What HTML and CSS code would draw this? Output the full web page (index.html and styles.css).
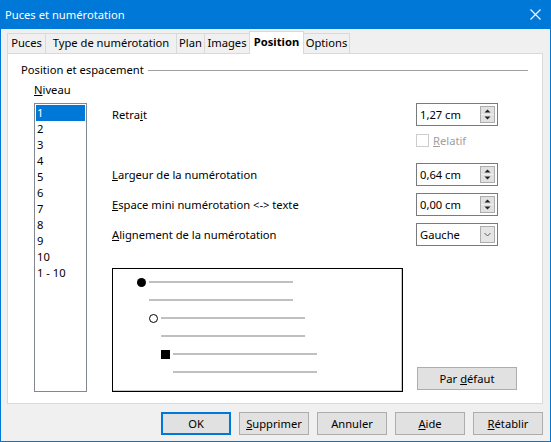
FILE: index.html
```
<!DOCTYPE html>
<html lang="fr">
<head>
<meta charset="utf-8">
<title>Puces et numérotation</title>
<link rel="stylesheet" href="styles.css">
</head>
<body>
<div class="window">
  <div class="titlebar">
    <span class="title">Puces et numérotation</span>
    <svg class="close" width="11" height="11" viewBox="0 0 11 11"><path d="M0.5 0.5L10.5 10.5M10.5 0.5L0.5 10.5" stroke="#ffffff" stroke-width="1.1" fill="none"/></svg>
  </div>
  <div class="main">
    <div class="tabs">
      <div class="tab t-puces">Puces</div>
      <div class="tab t-type">Type de numérotation</div>
      <div class="tab t-plan">Plan</div>
      <div class="tab t-images">Images</div>
      <div class="tab active t-position">Position</div>
      <div class="tab t-options">Options</div>
    </div>
    <div class="panel">
      <div class="group-head"><span class="group-title">Position et espacement</span><span class="rule"></span></div>
      <div class="group-body">
        <div class="level-col">
          <div class="level-label"><u>N</u>iveau</div>
          <ul class="level-list">
            <li class="sel">1</li>
            <li>2</li>
            <li>3</li>
            <li>4</li>
            <li>5</li>
            <li>6</li>
            <li>7</li>
            <li>8</li>
            <li>9</li>
            <li>10</li>
            <li>1 - 10</li>
          </ul>
        </div>
        <div class="settings">
          <div class="row">
            <span class="label">Retra<u>i</u>t</span>
            <div class="field">
              <span class="value">1,27 cm</span>
              <svg class="spinbtn" width="15" height="17" viewBox="0 0 15 17"><rect x="0.5" y="0.5" width="14" height="16" fill="#e1e1e1" stroke="#adadad"/><line x1="1" y1="8.5" x2="14" y2="8.5" stroke="#f0f0f0"/><polygon points="4.5,6.5 10.5,6.5 7.5,3.5" fill="#202020"/><polygon points="4.5,10.5 10.5,10.5 7.5,13.5" fill="#202020"/></svg>
            </div>
          </div>
          <div class="row check-row">
            <span class="label"></span>
            <div class="check">
              <span class="checkbox"></span>
              <span class="check-label"><u>R</u>elatif</span>
            </div>
          </div>
          <div class="row r-largeur">
            <span class="label"><u>L</u>argeur de la numérotation</span>
            <div class="field">
              <span class="value">0,64 cm</span>
              <svg class="spinbtn" width="15" height="17" viewBox="0 0 15 17"><rect x="0.5" y="0.5" width="14" height="16" fill="#e1e1e1" stroke="#adadad"/><line x1="1" y1="8.5" x2="14" y2="8.5" stroke="#f0f0f0"/><polygon points="4.5,6.5 10.5,6.5 7.5,3.5" fill="#202020"/><polygon points="4.5,10.5 10.5,10.5 7.5,13.5" fill="#202020"/></svg>
            </div>
          </div>
          <div class="row r-next">
            <span class="label"><u>E</u>space mini numérotation &lt;-&gt; texte</span>
            <div class="field">
              <span class="value">0,00 cm</span>
              <svg class="spinbtn" width="15" height="17" viewBox="0 0 15 17"><rect x="0.5" y="0.5" width="14" height="16" fill="#e1e1e1" stroke="#adadad"/><line x1="1" y1="8.5" x2="14" y2="8.5" stroke="#f0f0f0"/><polygon points="4.5,6.5 10.5,6.5 7.5,3.5" fill="#202020"/><polygon points="4.5,10.5 10.5,10.5 7.5,13.5" fill="#202020"/></svg>
            </div>
          </div>
          <div class="row r-next">
            <span class="label"><u>A</u>lignement de la numérotation</span>
            <div class="field">
              <span class="value">Gauche</span>
              <svg class="spinbtn" width="15" height="17" viewBox="0 0 15 17"><rect x="0.5" y="0.5" width="14" height="16" fill="#e5e5e5" stroke="#adadad"/><polyline points="4.5,7 7.5,10 10.5,7" fill="none" stroke="#606060" stroke-width="1"/></svg>
            </div>
          </div>
          <div class="preview-row">
            <div class="preview">
              <div class="pline i1"><span class="marker dot"></span><span class="bar"></span></div>
              <div class="pline i1"><span class="bar"></span></div>
              <div class="pline i2"><span class="marker ring"></span><span class="bar"></span></div>
              <div class="pline i2"><span class="bar"></span></div>
              <div class="pline i3"><span class="marker square"></span><span class="bar"></span></div>
              <div class="pline i3"><span class="bar"></span></div>
            </div>
            <button class="btn default-btn">Par <u>d</u>éfaut</button>
          </div>
        </div>
      </div>
    </div>
    <div class="buttons">
      <button class="btn primary">OK</button>
      <button class="btn"><u>S</u>upprimer</button>
      <button class="btn">Annuler</button>
      <button class="btn"><u>A</u>ide</button>
      <button class="btn"><u>R</u>établir</button>
    </div>
  </div>
</div>
</body>
</html>
```
FILE: styles.css
```
* {
  box-sizing: border-box;
}

html, body {
  margin: 0;
  padding: 0;
}

body {
  width: 551px;
  height: 442px;
  overflow: hidden;
  font-family: "Noto Sans", "Open Sans", sans-serif;
  font-size: 11.2px;
  line-height: 16px;
  color: #000;
}

.window {
  width: 551px;
  height: 442px;
  background: #f0f0f0;
  border: 1px solid #0078d7;
  border-top: none;
  display: flex;
  flex-direction: column;
}

.titlebar {
  height: 29px;
  background: #0078d7;
  color: #fff;
  display: flex;
  align-items: center;
  padding-left: 4px;
  padding-right: 9px;
}

.title {
  flex: 1;
}

.close {
  display: block;
}

.main {
  padding: 2px 7px 0 6px;
  display: flex;
  flex-direction: column;
}

.tabs {
  height: 22px;
  display: flex;
  align-items: flex-end;
}

.tab {
  height: 20px;
  border: 1px solid #d9d9d9;
  border-bottom: none;
  background: #f0f0f0;
  text-align: center;
  line-height: 18px;
  white-space: nowrap;
  margin-left: -1px;
}

.tab:first-child {
  margin-left: 0;
}

.tab.active {
  height: 23px;
  background: #fff;
  font-weight: bold;
  margin-bottom: -1px;
  position: relative;
  z-index: 1;
  line-height: 20px;
}

.t-puces { width: 39px; }
.t-type { width: 132px; }
.t-plan { width: 29px; }
.t-images { width: 46px; }
.t-position { width: 55px; }
.t-options { width: 47px; }

.panel {
  height: 351px;
  background: #fff;
  border: 1px solid #d9d9d9;
  display: flex;
  flex-direction: column;
}

.group-head {
  margin-top: 8px;
  height: 16px;
  display: flex;
  align-items: center;
  padding-left: 13px;
  padding-right: 14px;
}

.group-title {
  white-space: nowrap;
}

.rule {
  flex: 1;
  height: 1px;
  background: #a0a0a0;
  margin-left: 4px;
}

.group-body {
  display: flex;
  align-items: flex-start;
  padding-left: 26px;
}

.level-col {
  width: 53px;
  margin-top: 4px;
  margin-right: 25px;
}

.level-label {
  height: 16px;
  white-space: nowrap;
}

.level-list {
  list-style: none;
  margin: 5px 0 0 0;
  padding: 1px;
  height: 289px;
  border: 1px solid #828790;
  background: #fff;
}

.level-list li {
  height: 16px;
  line-height: 16px;
  padding-left: 1px;
  white-space: nowrap;
}

.level-list li.sel {
  background: #0078d7;
  color: #fff;
}

.settings {
  width: 405px;
  margin-top: 25px;
  display: flex;
  flex-direction: column;
}

.row {
  display: flex;
  align-items: center;
  margin-right: 19px;
}

.label {
  flex: 1;
  white-space: nowrap;
}

.field {
  width: 82px;
  height: 23px;
  border: 1px solid #7a7a7a;
  background: #fff;
  display: flex;
  align-items: center;
  padding-left: 3px;
  padding-right: 2px;
}

.value {
  flex: 1;
  white-space: nowrap;
}

.spinbtn {
  display: block;
}

.check-row {
  margin-top: 8px;
  height: 13px;
}

.check {
  width: 82px;
  display: flex;
  align-items: center;
}

.checkbox {
  width: 13px;
  height: 13px;
  border: 1px solid #cccccc;
  background: #fff;
  margin-right: 4px;
}

.check-label {
  color: #a0a0a0;
}

.r-largeur {
  margin-top: 16px;
}

.r-next {
  margin-top: 7px;
}

.preview-row {
  margin-top: 22px;
  display: flex;
  align-items: flex-end;
}

.preview {
  width: 291px;
  height: 124px;
  border: 1px solid #000;
  box-shadow: inset -1px -1px 0 #c8c8c8;
  background: #fff;
  padding-top: 4px;
  display: flex;
  flex-direction: column;
}

.pline {
  height: 18px;
  display: flex;
  align-items: center;
}

.pline.i1 { padding-left: 36px; }
.pline.i2 { padding-left: 48px; }
.pline.i3 { padding-left: 60px; }

.bar {
  width: 144px;
  height: 2px;
  background: #c0c0c0;
}

.marker {
  width: 9px;
  height: 9px;
  margin-left: -12px;
  margin-right: 3px;
}

.marker.dot {
  background: #000;
  border-radius: 50%;
}

.marker.ring {
  border: 1px solid #000;
  border-radius: 50%;
  background: #fff;
}

.marker.square {
  background: #000;
}

.btn {
  font-family: "Noto Sans", "Open Sans", sans-serif;
  font-size: 11.2px;
  line-height: 16px;
  color: #000;
  background: #e1e1e1;
  border: 1px solid #adadad;
  height: 23px;
  padding: 0;
  text-align: center;
  white-space: nowrap;
}

.default-btn {
  width: 100px;
  margin-left: 14px;
  margin-bottom: 2px;
}

.buttons {
  margin-top: 8px;
  display: flex;
  justify-content: flex-end;
  gap: 8px;
}

.buttons .btn {
  width: 70px;
}

.buttons .btn.primary {
  border: 2px solid #0078d7;
}
```
